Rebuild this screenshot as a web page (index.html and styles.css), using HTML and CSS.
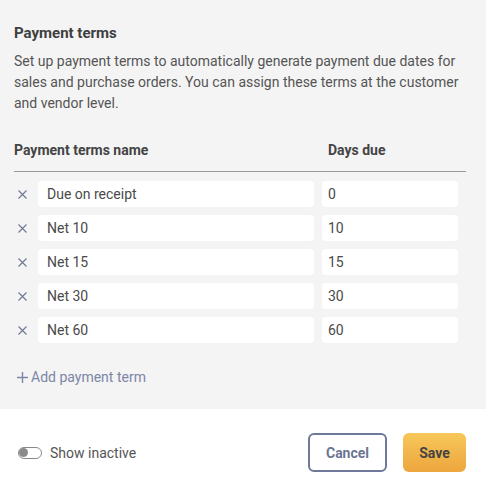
FILE: index.html
```
<!DOCTYPE html>
<html>
<head>
<meta charset="utf-8">
<link rel="stylesheet" href="styles.css">
</head>
<body>
<div class="panel">
  <h2 class="title">Payment terms</h2>
  <p class="desc">Set up payment terms to automatically generate payment due dates for sales and purchase orders. You can assign these terms at the customer and vendor level.</p>
  <div class="head">
    <span class="head-name">Payment terms name</span>
    <span class="head-days">Days due</span>
  </div>
  <div class="rows">
    <div class="row">
      <span class="remove"><svg width="9" height="9" viewBox="0 0 9 9"><path d="M0.5 0.5L8.5 8.5M8.5 0.5L0.5 8.5" stroke="#6e7794" stroke-width="1.1" fill="none"/></svg></span>
      <div class="field name">Due on receipt</div>
      <div class="field days">0</div>
    </div>
    <div class="row">
      <span class="remove"><svg width="9" height="9" viewBox="0 0 9 9"><path d="M0.5 0.5L8.5 8.5M8.5 0.5L0.5 8.5" stroke="#6e7794" stroke-width="1.1" fill="none"/></svg></span>
      <div class="field name">Net 10</div>
      <div class="field days">10</div>
    </div>
    <div class="row">
      <span class="remove"><svg width="9" height="9" viewBox="0 0 9 9"><path d="M0.5 0.5L8.5 8.5M8.5 0.5L0.5 8.5" stroke="#6e7794" stroke-width="1.1" fill="none"/></svg></span>
      <div class="field name">Net 15</div>
      <div class="field days">15</div>
    </div>
    <div class="row">
      <span class="remove"><svg width="9" height="9" viewBox="0 0 9 9"><path d="M0.5 0.5L8.5 8.5M8.5 0.5L0.5 8.5" stroke="#6e7794" stroke-width="1.1" fill="none"/></svg></span>
      <div class="field name">Net 30</div>
      <div class="field days">30</div>
    </div>
    <div class="row">
      <span class="remove"><svg width="9" height="9" viewBox="0 0 9 9"><path d="M0.5 0.5L8.5 8.5M8.5 0.5L0.5 8.5" stroke="#6e7794" stroke-width="1.1" fill="none"/></svg></span>
      <div class="field name">Net 60</div>
      <div class="field days">60</div>
    </div>
  </div>
  <div class="add"><svg width="11" height="11" viewBox="0 0 11 11"><path d="M5.5 0V11M0 5.5H11" stroke="#7c86a6" stroke-width="1.4" fill="none"/></svg><span>Add payment term</span></div>
</div>
<div class="footer">
  <div class="toggle-wrap">
    <span class="toggle"><span class="knob"></span></span>
    <span class="toggle-label">Show inactive</span>
  </div>
  <div class="actions">
    <button class="btn cancel">Cancel</button>
    <button class="btn save">Save</button>
  </div>
</div>
</body>
</html>
```
FILE: styles.css
```
* { box-sizing: border-box; }
html, body { margin: 0; padding: 0; background: #ffffff; }
body { font-family: Roboto, "Noto Sans", sans-serif; color: #444; }

.panel {
  background: #f4f4f4;
  padding: 23px 20px 0 14px;
  height: 409px;
}
.title {
  margin: 0;
  font-size: 15px;
  line-height: 20px;
  font-weight: 700;
  color: #3f3f3f;
}
.desc {
  margin: 8px 0 0 0;
  font-size: 14px;
  line-height: 21px;
  color: #555;
}
.head {
  margin-top: 26px;
  display: flex;
  font-size: 14px;
  line-height: 20px;
  font-weight: 700;
  color: #444;
  padding-bottom: 11px;
  border-bottom: 1px solid #9a9a9a;
}
.head-name { width: 314px; }
.rows {
  margin-top: 9px;
  display: flex;
  flex-direction: column;
  gap: 8px;
}
.row {
  display: flex;
  align-items: center;
  height: 26px;
}
.remove {
  width: 16px;
  margin-right: 8px;
  display: flex;
  justify-content: center;
}
.field {
  height: 26px;
  background: #fff;
  border-radius: 4px;
  font-size: 14px;
  line-height: 26px;
  color: #4a4a4a;
}
.field.name { width: 276px; padding-left: 9px; }
.field.days { width: 136px; margin-left: 8px; padding-left: 6px; }

.add {
  margin-top: 26px;
  display: flex;
  align-items: center;
  gap: 3px;
  padding-left: 3px;
  font-size: 14px;
  line-height: 16px;
  color: #7c86a6;
}

.footer {
  display: flex;
  align-items: center;
  justify-content: space-between;
  padding: 24px 20px 0 18px;
}
.toggle-wrap { display: flex; align-items: center; gap: 8px; }
.toggle {
  width: 24px;
  height: 12px;
  border: 1.3px solid #8a8a8a;
  border-radius: 6px;
  position: relative;
  display: inline-block;
}
.knob {
  position: absolute;
  left: 0px;
  top: 0px;
  width: 9.4px;
  height: 9.4px;
  border-radius: 50%;
  background: #8a8a8a;
}
.toggle-label { font-size: 14px; color: #555; }
.actions { display: flex; gap: 16px; }
.btn {
  height: 39px;
  border-radius: 6px;
  font-family: Roboto, sans-serif;
  font-size: 14px;
  font-weight: 700;
  padding: 0;
}
.cancel {
  width: 79px;
  background: #fff;
  border: 2px solid #6e7898;
  color: #6b7594;
}
.save {
  width: 63px;
  border: none;
  background: linear-gradient(#f7c75a, #eda63e);
  color: #444;
}
```
